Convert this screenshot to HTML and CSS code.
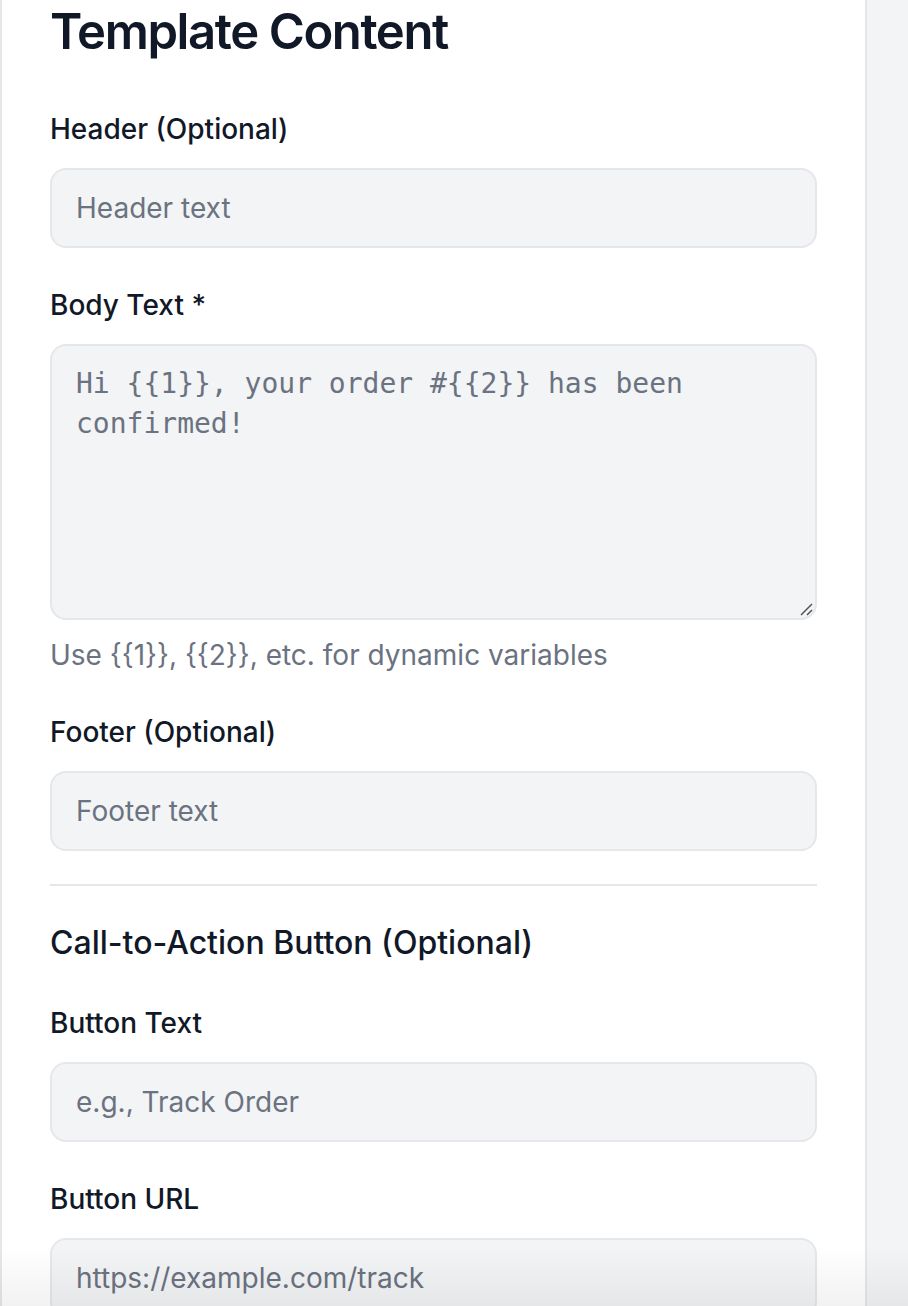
FILE: index.html
```html
<!DOCTYPE html>
<html lang="en">
<head>
<meta charset="utf-8">
<title>Template Content</title>
<link rel="stylesheet" href="styles.css">
</head>
<body>
<div class="page">
  <main class="card">
    <h1 class="title">Template Content</h1>

    <div class="field">
      <label class="label">Header (Optional)</label>
      <div class="input placeholder">Header text</div>
    </div>

    <div class="field">
      <label class="label">Body Text *</label>
      <div class="textarea">Hi {{1}}, your order #{{2}} has been confirmed!<svg class="grip" width="14" height="14" viewBox="0 0 14 14"><path d="M13 2 L2 13 M13 8 L8 13" stroke="#555" stroke-width="1.5" fill="none"/></svg></div>
      <p class="hint">Use {{1}}, {{2}}, etc. for dynamic variables</p>
    </div>

    <div class="field field-last">
      <label class="label">Footer (Optional)</label>
      <div class="input placeholder">Footer text</div>
    </div>

    <hr class="divider">

    <h2 class="subtitle">Call-to-Action Button (Optional)</h2>

    <div class="field">
      <label class="label">Button Text</label>
      <div class="input placeholder">e.g., Track Order</div>
    </div>

    <div class="field">
      <label class="label">Button URL</label>
      <div class="input placeholder">https://example.com/track</div>
    </div>
  </main>
  <aside class="side"></aside>
</div>
<div class="fade"></div>
</body>
</html>
```

FILE: styles.css
```css
html, body {
  margin: 0;
  padding: 0;
}
body {
  background: #f3f4f6;
  font-family: Inter, "Noto Sans", sans-serif;
  color: #111827;
  height: 1306px;
  overflow: hidden;
}
.page {
  display: flex;
  height: 1306px;
}
.card {
  box-sizing: border-box;
  width: 867px;
  background: #ffffff;
  border-left: 2px solid #e5e7eb;
  border-right: 2px solid #e5e7eb;
  padding: 0 48px;
  display: flex;
  flex-direction: column;
}
.side {
  flex: 1;
  background: #f3f4f6;
}
.title {
  margin: 0 0 45px 0;
  font-size: 49px;
  line-height: 64px;
  font-weight: 600;
  letter-spacing: -1.4px;
  color: #111827;
}
.field {
  display: flex;
  flex-direction: column;
  margin-bottom: 37px;
}
.field-last {
  margin-bottom: 33px;
}
.label {
  font-size: 28px;
  line-height: 40px;
  font-weight: 500;
  margin-bottom: 19px;
  color: #111827;
}
.input {
  box-sizing: border-box;
  height: 80px;
  border: 2px solid #e5e7eb;
  border-radius: 16px;
  background: #f3f4f6;
  padding: 0 24px;
  display: flex;
  align-items: center;
  font-size: 28px;
}
.placeholder {
  color: #6b7280;
}
.textarea {
  position: relative;
  box-sizing: border-box;
  height: 276px;
  border: 2px solid #e5e7eb;
  border-radius: 16px;
  background: #f3f4f6;
  padding: 18px 24px;
  font-family: "DejaVu Sans Mono", monospace;
  font-size: 28px;
  line-height: 40px;
  color: #6b7280;
}
.grip {
  position: absolute;
  right: 2px;
  bottom: 2px;
}
.hint {
  margin: 15px 0 0 0;
  font-size: 28px;
  line-height: 40px;
  color: #6b7280;
}
.divider {
  border: 0;
  border-top: 2px solid #e5e7eb;
  margin: 0 0 35px 0;
}
.subtitle {
  margin: 0 0 38px 0;
  font-size: 32px;
  line-height: 44px;
  font-weight: 500;
  color: #111827;
}
.fade {
  position: fixed;
  left: 0;
  right: 0;
  bottom: 0;
  height: 60px;
  background: linear-gradient(to bottom, rgba(0,0,0,0), rgba(0,0,0,0.05));
  pointer-events: none;
}
```
